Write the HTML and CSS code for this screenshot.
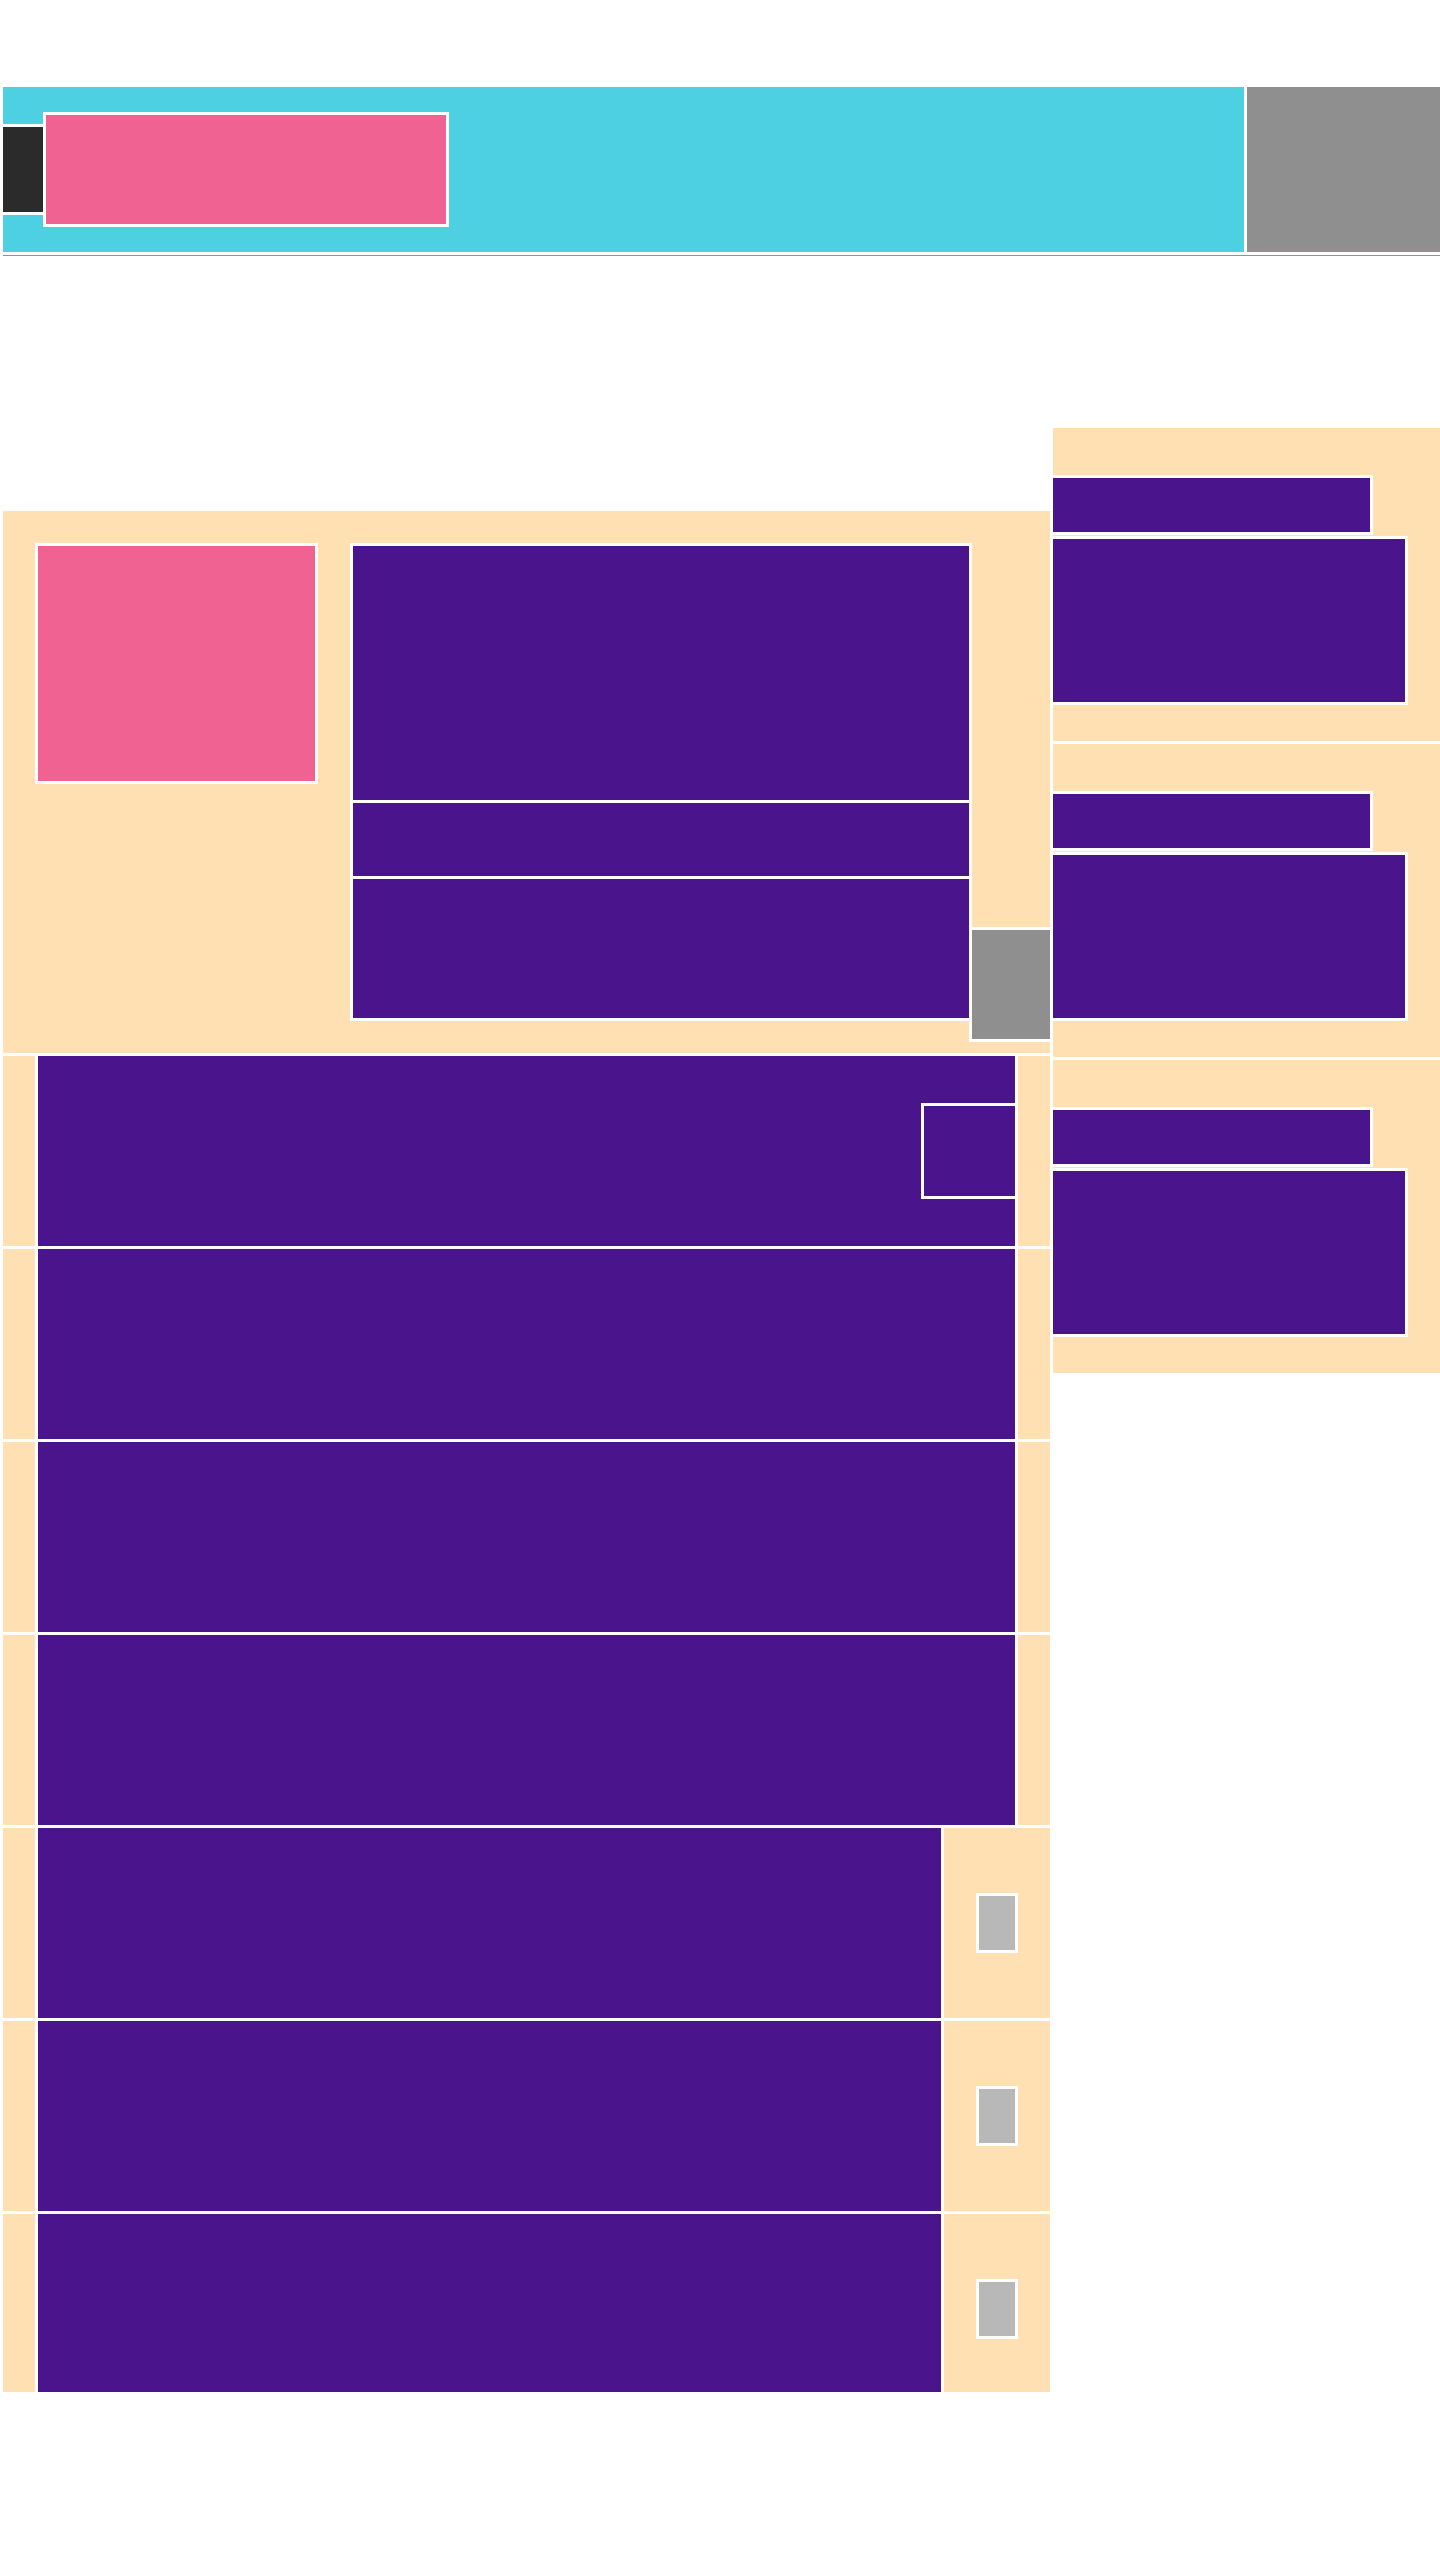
FILE: index.html
```html
<!DOCTYPE html>
<html lang="en">
<head>
  <meta charset="UTF-8" />
  <meta name="viewport" content="width=device-width, initial-scale=1.0"/>
  <title>Layout</title>
  <link rel="stylesheet" href="styles.css">
</head>
<body>

  <!-- top bar -->
  <header class="topbar">
    <div class="topbar-main">
      <div class="menu-btn"></div>
      <div class="logo"></div>
    </div>
    <div class="account"></div>
  </header>
  <div class="divider"></div>

  <div class="layout">
    <main class="main">
      <!-- hero -->
      <section class="hero">
        <div class="hero-img"></div>
        <div class="hero-info">
          <div class="hero-title"></div>
          <div class="hero-meta"></div>
          <div class="hero-desc"></div>
        </div>
        <div class="hero-fab"></div>
      </section>

      <!-- list -->
      <div class="row">
        <div class="row-body wide">
          <div class="row-badge"></div>
        </div>
      </div>
      <div class="row"><div class="row-body wide"></div></div>
      <div class="row"><div class="row-body wide"></div></div>
      <div class="row"><div class="row-body wide"></div></div>
      <div class="row">
        <div class="row-body"></div>
        <div class="row-action"><div class="action-btn"></div></div>
      </div>
      <div class="row">
        <div class="row-body"></div>
        <div class="row-action"><div class="action-btn"></div></div>
      </div>
      <div class="row">
        <div class="row-body"></div>
        <div class="row-action"><div class="action-btn"></div></div>
      </div>
    </main>

    <aside class="sidebar">
      <div class="widget">
        <div class="widget-title"></div>
        <div class="widget-body"></div>
      </div>
      <div class="widget">
        <div class="widget-title"></div>
        <div class="widget-body"></div>
      </div>
      <div class="widget">
        <div class="widget-title"></div>
        <div class="widget-body"></div>
      </div>
    </aside>
  </div>

</body>
</html>
```

FILE: styles.css
```css
* { margin: 0; padding: 0; box-sizing: border-box; }
html, body {
  width: 1440px;
  background: #fff;
  font-family: 'Liberation Sans', Arial, sans-serif;
  overflow-x: hidden;
}

/* top bar */
.topbar {
  display: flex;
  margin-top: 84px;
  height: 171px;
}
.topbar-main {
  width: 1247px;
  border: 3px solid #fff;
  background: #4dd0e1;
  display: flex;
  align-items: center;
}
.menu-btn {
  width: 46px;
  height: 91px;
  margin-left: -3px;
  border: 3px solid #fff;
  background: #2b2b2b;
}
.logo {
  width: 406px;
  height: 115px;
  margin-left: -3px;
  border: 3px solid #fff;
  background: #f06292;
}
.account {
  width: 196px;
  margin-left: -3px;
  border: 3px solid #fff;
  border-right: 0;
  background: #8f8f8f;
}
.divider {
  height: 1px;
  margin-left: 3px;
  background: #f06292;
}

.layout {
  display: flex;
  align-items: flex-start;
}

/* main column, cut off at the bottom */
.main {
  width: 1053px;
  height: 1884px;
  margin-top: 252px;
  overflow: hidden;
}
.hero {
  display: flex;
  height: 548px;
  border: 3px solid #fff;
  padding: 32px 0 32px 32px;
  background: #ffe0b2;
}
.hero-img {
  width: 283px;
  height: 241px;
  border: 3px solid #fff;
  background: #f06292;
}
.hero-info {
  width: 622px;
  margin-left: 32px;
  display: flex;
  flex-direction: column;
}
.hero-info > div {
  border: 3px solid #fff;
  background: #4a148c;
}
.hero-title { height: 260px; }
.hero-meta { height: 79px; margin-top: -3px; }
.hero-desc { height: 145px; margin-top: -3px; }
.hero-fab {
  width: 84px;
  height: 115px;
  margin: 0 -3px -21px -3px;
  align-self: flex-end;
  border: 3px solid #fff;
  background: #8f8f8f;
}

.row {
  display: flex;
  flex-shrink: 0;
  height: 196px;
  margin-top: -3px;
  border: 3px solid #fff;
  padding-left: 32px;
  background: #ffe0b2;
}
.row-body {
  position: relative;
  width: 909px;
  margin: -3px 0;
  border: 3px solid #fff;
  background: #4a148c;
}
.row-body.wide { width: 983px; }
.row-badge {
  position: absolute;
  top: 47px;
  right: -3px;
  width: 97px;
  height: 96px;
  border: 3px solid #fff;
  background: #4a148c;
}
.row-action {
  flex: 1;
  display: flex;
  align-items: center;
  justify-content: center;
}
.action-btn {
  width: 42px;
  height: 60px;
  border: 3px solid #fff;
  background: #b8b8b8;
}

/* sidebar */
.sidebar {
  width: 390px;
  margin-left: -3px;
  margin-top: 169px;
}
.widget {
  height: 319px;
  border: 3px solid #fff;
  border-right: 0;
  padding: 47px 0 36px 0;
  background: #ffe0b2;
}
.widget + .widget { margin-top: -3px; }
.widget-title {
  width: 323px;
  height: 60px;
  margin-left: -3px;
  border: 3px solid #fff;
  background: #4a148c;
}
.widget-body {
  width: 358px;
  height: 169px;
  margin: 1px 0 0 -3px;
  border: 3px solid #fff;
  background: #4a148c;
}
```
